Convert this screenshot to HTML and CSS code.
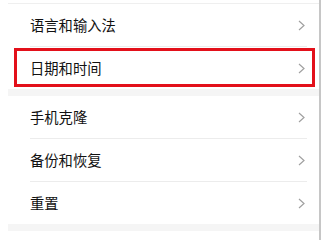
FILE: index.html
```html
<!DOCTYPE html>
<html lang="zh">
<head>
<meta charset="utf-8">
<link rel="stylesheet" href="styles.css">
</head>
<body>
<div class="page">
  <div class="list">
    <div class="topline"></div>
    <div class="row">
      <span class="label">语言和输入法</span>
      <svg class="chev" width="7" height="11" viewBox="0 0 7 11"><polyline points="1,1 6,5.5 1,10" fill="none" stroke="#a0a0a0" stroke-width="1.2"/></svg>
    </div>
    <div class="sep"></div>
    <div class="row">
      <span class="label">日期和时间</span>
      <svg class="chev" width="7" height="11" viewBox="0 0 7 11"><polyline points="1,1 6,5.5 1,10" fill="none" stroke="#a0a0a0" stroke-width="1.2"/></svg>
    </div>
    <div class="band"></div>
    <div class="row">
      <span class="label">手机克隆</span>
      <svg class="chev" width="7" height="11" viewBox="0 0 7 11"><polyline points="1,1 6,5.5 1,10" fill="none" stroke="#a0a0a0" stroke-width="1.2"/></svg>
    </div>
    <div class="sep"></div>
    <div class="row">
      <span class="label">备份和恢复</span>
      <svg class="chev" width="7" height="11" viewBox="0 0 7 11"><polyline points="1,1 6,5.5 1,10" fill="none" stroke="#a0a0a0" stroke-width="1.2"/></svg>
    </div>
    <div class="sep"></div>
    <div class="row">
      <span class="label">重置</span>
      <svg class="chev" width="7" height="11" viewBox="0 0 7 11"><polyline points="1,1 6,5.5 1,10" fill="none" stroke="#a0a0a0" stroke-width="1.2"/></svg>
    </div>
    <div class="band"></div>
  </div>
  <div class="scrollbar"></div>
  <div class="highlight"></div>
</div>
</body>
</html>
```
FILE: styles.css
```css
html, body {
  margin: 0;
  padding: 0;
  background: #ffffff;
}
.page {
  position: relative;
  display: flex;
  width: 322px;
  height: 240px;
  overflow: hidden;
  font-family: "Noto Sans CJK SC", "Noto Sans", sans-serif;
}
.list {
  flex: 1;
  margin-left: 8px;
  display: flex;
  flex-direction: column;
}
.topline {
  margin-top: 3px;
  height: 1px;
  background: #efefef;
}
.row {
  height: 42px;
  display: flex;
  align-items: center;
  justify-content: space-between;
  padding: 0 14px 0 22px;
}
.label {
  font-size: 14.3px;
  color: #111111;
  line-height: 1;
}
.chev {
  display: block;
}
.sep {
  height: 1px;
  background: #ececec;
  margin: 0 12px 0 22px;
}
.band {
  height: 7px;
  background: #f5f5f5;
}
.scrollbar {
  width: 2px;
  margin-right: 1px;
  background: #c6c6c6;
}
.highlight {
  position: absolute;
  left: 14px;
  top: 48px;
  width: 301px;
  height: 39px;
  box-sizing: border-box;
  border: 3px solid #e3101a;
}
```
